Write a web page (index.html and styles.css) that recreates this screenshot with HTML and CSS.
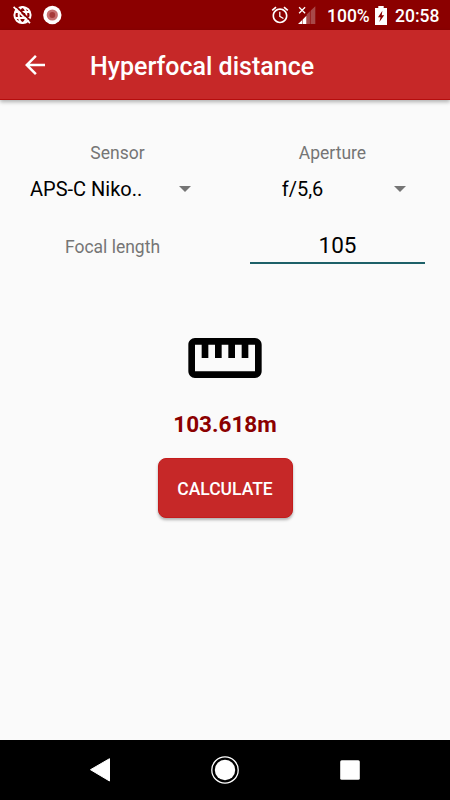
FILE: index.html
```html
<!DOCTYPE html>
<html lang="en">
<head>
    <meta charset="UTF-8">
    <title>Hyperfocal distance</title>
    <link rel="stylesheet" href="styles.css">
</head>
<body>
    <div class="statusbar">
        <svg class="globe" width="20" height="20" viewBox="0 0 20 20">
            <g fill="none" stroke="#fff" stroke-width="2">
                <circle cx="10.5" cy="10" r="8.1"/>
                <ellipse cx="10.5" cy="10" rx="3.8" ry="8.1"/>
                <path d="M3.3 6.9h14.4M3.3 13.1h14.4"/>
            </g>
            <path d="M3.4 .6l16 16" stroke="#8b0000" stroke-width="1.8"/>
            <path d="M1.6 1.8l16.4 16.4" stroke="#fff" stroke-width="1.7"/>
        </svg>
        <svg class="record" width="20" height="20" viewBox="0 0 20 20">
            <circle cx="10.3" cy="10" r="9.2" fill="#fff"/>
            <circle cx="10.3" cy="10" r="5.6" fill="#c77070"/>
            <circle cx="10.3" cy="10" r="2.9" fill="#a63a3a"/>
        </svg>
        <svg class="alarm" width="20" height="20" viewBox="0 0 24 24">
            <path fill="#fff" d="M22 5.72l-4.6-3.86-1.29 1.53 4.6 3.86L22 5.72zM7.88 3.39L6.6 1.86 2 5.71l1.29 1.53 4.59-3.85zM12.5 8H11v6l4.75 2.85.75-1.23-4-2.37V8zM12 4c-4.97 0-9 4.03-9 9s4.02 9 9 9c4.97 0 9-4.03 9-9s-4.03-9-9-9zm0 16c-3.87 0-7-3.13-7-7s3.13-7 7-7 7 3.13 7 7-3.13 7-7 7z"/>
        </svg>
        <svg class="signal" width="18" height="18" viewBox="0 0 18 18">
            <path fill="#a84848" d="M8.6 8.4L17.3.2V18H8.6z"/>
            <path stroke="#8b0000" stroke-width=".6" d="M12.4 3v15"/>
            <path fill="#fff" d="M0 18l4.2-4V18zM4.7 13.4l3.7-3.6V18H4.7z"/>
            <path stroke="#fff" stroke-width="1.3" d="M1.1 1.3l6 6M7.1 1.3l-6 6"/>
        </svg>
        <span class="percent">100%</span>
        <svg class="battery" width="12" height="19" viewBox="0 0 12 19">
            <path fill="#fff" d="M3.3 0h5.4v2H12v17H0V2h3.3z"/>
            <path fill="#8b0000" d="M7.4 4.7L3 11.3h2.5L4.4 16l4.8-6.8H6.7z"/>
        </svg>
        <span class="clock">20:58</span>
    </div>
    <div class="toolbar">
        <svg class="back" width="30" height="30" viewBox="0 0 24 24">
            <path fill="#fff" d="M20 11H7.83l5.59-5.59L12 4l-8 8 8 8 1.41-1.41L7.83 13H20v-2z"/>
        </svg>
        <h1 class="title">Hyperfocal distance</h1>
    </div>
    <div class="content">
        <div class="pickers">
            <div class="picker">
                <div class="label">Sensor</div>
                <div class="spinner"><span class="value">APS-C Niko..</span><span class="arrow"></span></div>
            </div>
            <div class="picker">
                <div class="label">Aperture</div>
                <div class="spinner aperture"><span class="value">f/5,6</span><span class="arrow"></span></div>
            </div>
        </div>
        <div class="focal">
            <label class="label" for="focal">Focal length</label>
            <input id="focal" class="focal-input" type="text" value="105">
        </div>
        <svg class="ruler" width="80" height="80" viewBox="0 0 24 24">
            <path d="M21 6H3c-1.1 0-2 .9-2 2v8c0 1.1.9 2 2 2h18c1.1 0 2-.9 2-2V8c0-1.1-.9-2-2-2zm0 10H3V8h2v4h2V8h2v4h2V8h2v4h2V8h2v4h2V8h2v8z"/>
        </svg>
        <div class="result">103.618m</div>
        <button class="calculate">CALCULATE</button>
    </div>
    <div class="navbar">
        <svg width="30" height="30" viewBox="0 0 30 30">
            <path fill="#fff" stroke="#fff" stroke-linejoin="round" d="M5.5 14.7L24.5 3.7V26z"/>
        </svg>
        <svg width="30" height="30" viewBox="0 0 30 30">
            <circle cx="15" cy="15" r="13.2" fill="none" stroke="#fff" stroke-width="1.3"/>
            <circle cx="15" cy="15" r="10.2" fill="#fff"/>
        </svg>
        <svg width="30" height="30" viewBox="0 0 30 30">
            <rect x="5.2" y="5.2" width="19.6" height="19.6" rx="1.5" fill="#fff"/>
        </svg>
    </div>
</body>
</html>
```
FILE: styles.css
```css
:root {
    --primary: #c62828;
    --dark: #8b0000;
    --accent: #1d6068;
}
* {
    box-sizing: border-box;
}
body {
    display: flex;
    flex-direction: column;
    height: 800px;
    margin: 0;
    background: #fafafa;
    color: #000;
    font-family: Roboto, sans-serif;
    font-size: 20px;
    overflow: hidden;
}
.statusbar {
    display: flex;
    align-items: center;
    height: 30px;
    padding: 0 10px 0 12px;
    background: var(--dark);
    color: #fff;
    font-size: 17.5px;
    font-weight: 500;
    line-height: 30px;
}
.record {
    margin-left: 10px;
}
.alarm {
    margin-left: auto;
}
.signal {
    margin: 0 11px 0 8px;
}
.percent {
    width: 43px;
    padding-top: 2px;
}
.battery {
    margin: 0 8px 0 5px;
}
.clock {
    width: 45px;
    padding-top: 2px;
}
.toolbar {
    display: flex;
    align-items: center;
    height: 70px;
    padding: 1px 20px 0;
    background: var(--primary);
    border-bottom: 1px solid #b50d0d;
    box-shadow: 0 2px 4px rgba(0, 0, 0, .3);
    color: #fff;
}
.title {
    margin: 3px 0 0 40px;
    font-size: 25px;
    font-weight: 500;
}
.content {
    display: flex;
    flex: 1;
    flex-direction: column;
    align-items: center;
    padding-top: 40px;
}
.pickers {
    display: flex;
    width: 430px;
}
.picker {
    width: 215px;
}
.label {
    color: #757575;
    font-size: 17.5px;
    line-height: 26px;
    text-align: center;
}
.spinner {
    display: flex;
    align-items: center;
    height: 46px;
    padding-left: 20px;
}
.value {
    width: 112px;
    text-align: center;
    white-space: nowrap;
}
.aperture .value {
    padding-left: 3px;
}
.arrow {
    margin-left: 37px;
    border: 6px solid transparent;
    border-top-color: #757575;
    border-bottom: 0;
}
.focal {
    display: flex;
    align-items: center;
    width: 450px;
    height: 50px;
    margin-top: 10px;
}
.focal .label {
    width: 225px;
}
.focal-input {
    width: 175px;
    height: 34px;
    margin: 0 0 0 25px;
    padding: 0 0 3px;
    background: none;
    border: 0;
    border-bottom: 2px solid var(--accent);
    color: #000;
    font: 22.5px Roboto, sans-serif;
    text-align: center;
}
.ruler {
    margin-top: 45.5px;
}
.result {
    margin-top: 11.5px;
    color: var(--dark);
    font-size: 22.5px;
    font-weight: 700;
    line-height: 30px;
}
.calculate {
    width: 135px;
    height: 60px;
    margin-top: 19px;
    padding: 2px 0 0;
    background: var(--primary);
    border: 1px solid #c41c1c;
    border-radius: 8px;
    box-shadow: 0 2px 3px rgba(0, 0, 0, .3);
    color: #fff;
    font: 500 17.5px Roboto, sans-serif;
}
.navbar {
    display: flex;
    align-items: center;
    justify-content: center;
    gap: 95px;
    height: 60px;
    background: #000;
}
```
